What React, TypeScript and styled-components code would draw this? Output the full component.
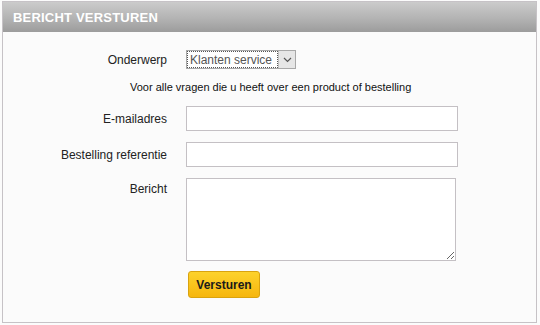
import { FC } from 'react';
import styled, { createGlobalStyle } from 'styled-components';

const GlobalStyle = createGlobalStyle`
  html, body {
    margin: 0;
    padding: 0;
    background: #fbfbfb;
    font-family: 'Liberation Sans', Arial, sans-serif;
  }
`;

const Panel = styled.div`
  width: 535px;
  height: 322px;
  margin: 1px 0 0 2px;
  border: 1px solid #c6c2c6;
  box-sizing: border-box;
  background: #fbfbfb;
`;

const Header = styled.div`
  height: 30px;
  padding: 0 10px;
  display: flex;
  align-items: center;
  background: linear-gradient(#cbcbcb, #b3b3b3 55%, #9c9c9c);
  color: #fff;
  font-size: 13px;
  font-weight: bold;
  letter-spacing: 0.2px;
`;

const Form = styled.form`
  display: grid;
  grid-template-columns: 164px 272px;
  column-gap: 19px;
  align-items: center;
  padding-top: 18px;
  font-size: 12px;
  color: #222;
`;

const Label = styled.label<{ top?: boolean }>`
  text-align: right;
  align-self: ${(p) => (p.top ? 'start' : 'center')};
  padding-top: ${(p) => (p.top ? '4px' : '0')};
`;

const SelectBox = styled.div`
  display: flex;
  width: 110px;
  height: 19px;
  border: 1px solid #a8a8a8;
  box-sizing: border-box;
  background: #fff;
`;

const SelectText = styled.span`
  flex: 1;
  display: flex;
  align-items: center;
  padding-left: 2px;
  margin: 1px;
  outline: 1px dotted #555;
  color: #555;
  font-size: 12px;
`;

const SelectArrow = styled.span`
  width: 16px;
  display: flex;
  align-items: center;
  justify-content: center;
  background: #e6e6e6;
  border-left: 1px solid #c0c0c0;
`;

const Help = styled.div`
  grid-column: 1 / span 2;
  margin: 12px 0 13px 127px;
  font-size: 11px;
  color: #111;
`;

const Input = styled.input`
  width: 272px;
  height: 25px;
  box-sizing: border-box;
  border: 1px solid #c4c0c4;
  background: #fff;
  margin-bottom: 11px;
`;

const TextArea = styled.textarea`
  width: 270px;
  height: 83px;
  box-sizing: border-box;
  border: 1px solid #c4c0c4;
  background: #fff;
  resize: both;
`;

const Button = styled.button`
  grid-column: 2;
  margin: 10px 0 0 2px;
  width: 72px;
  height: 27px;
  border: 1px solid #d9a30f;
  border-radius: 3px;
  background: linear-gradient(#fdd22c, #f6b60e);
  font-family: 'Liberation Sans', Arial, sans-serif;
  font-size: 12px;
  font-weight: bold;
  color: #1a1a1a;
  padding: 0;
`;

const App: FC = () => {
  return (
    <>
      <GlobalStyle />
      <Panel>
        <Header>BERICHT VERSTUREN</Header>
        <Form onSubmit={(e) => e.preventDefault()}>
          <Label>Onderwerp</Label>
          <SelectBox>
            <SelectText>Klanten service</SelectText>
            <SelectArrow>
              <svg width="9" height="6" viewBox="0 0 9 6">
                <path d="M1 1 L4.5 4.5 L8 1" stroke="#555" strokeWidth="1.2" fill="none" />
              </svg>
            </SelectArrow>
          </SelectBox>
          <Help>Voor alle vragen die u heeft over een product of bestelling</Help>
          <Label style={{ marginBottom: 11 }}>E-mailadres</Label>
          <Input />
          <Label style={{ marginBottom: 11 }}>Bestelling referentie</Label>
          <Input />
          <Label top>Bericht</Label>
          <TextArea />
          <Button type="submit">Versturen</Button>
        </Form>
      </Panel>
    </>
  );
};

export default App;
